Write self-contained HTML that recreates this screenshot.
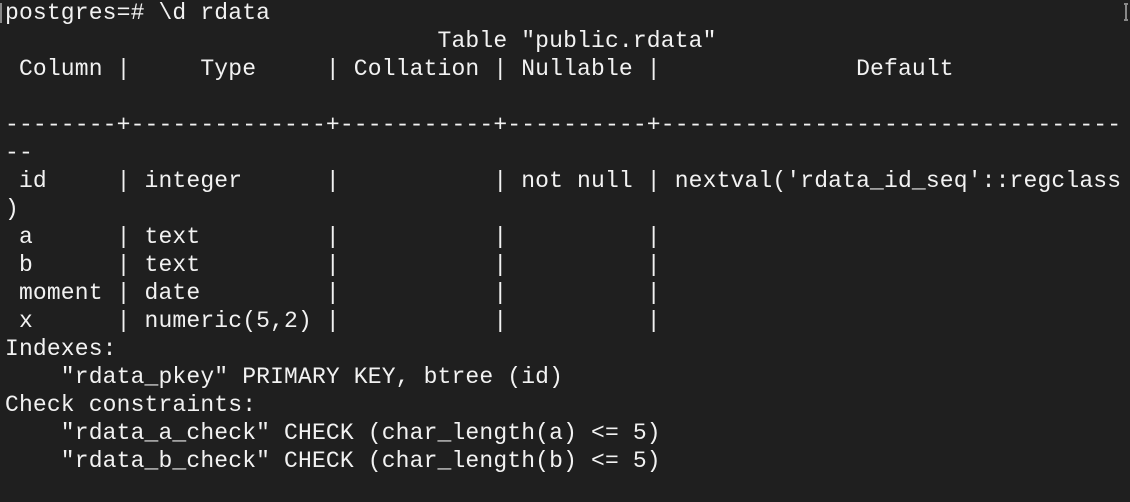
<!DOCTYPE html>
<html><head><meta charset="utf-8"><style>
html,body{margin:0;padding:0;background:#1f1f1f;width:1130px;height:502px;overflow:hidden}
pre{margin:0;position:absolute;left:5px;top:-1px;font-family:"Liberation Mono",monospace;font-size:23px;letter-spacing:0.15px;line-height:28px;color:#f2f2f2}
.m1{position:absolute;left:0;top:3px;width:2px;height:20px;background:#888}
.m2{position:absolute;left:1124px;top:3px;width:4px;height:18px;border:2px solid #888;border-left:none;border-right:none;box-sizing:border-box}
.m2:after{content:"";position:absolute;left:1px;top:0;width:2px;height:16px;background:#888}
</style></head><body>
<div class="m1"></div><div class="m2"></div>
<pre>postgres=# \d rdata
                               Table "public.rdata"
 Column |     Type     | Collation | Nullable |              Default

--------+--------------+-----------+----------+---------------------------------
--
 id     | integer      |           | not null | nextval('rdata_id_seq'::regclass
)
 a      | text         |           |          |
 b      | text         |           |          |
 moment | date         |           |          |
 x      | numeric(5,2) |           |          |
Indexes:
    "rdata_pkey" PRIMARY KEY, btree (id)
Check constraints:
    "rdata_a_check" CHECK (char_length(a) &lt;= 5)
    "rdata_b_check" CHECK (char_length(b) &lt;= 5)</pre>
</body></html>
